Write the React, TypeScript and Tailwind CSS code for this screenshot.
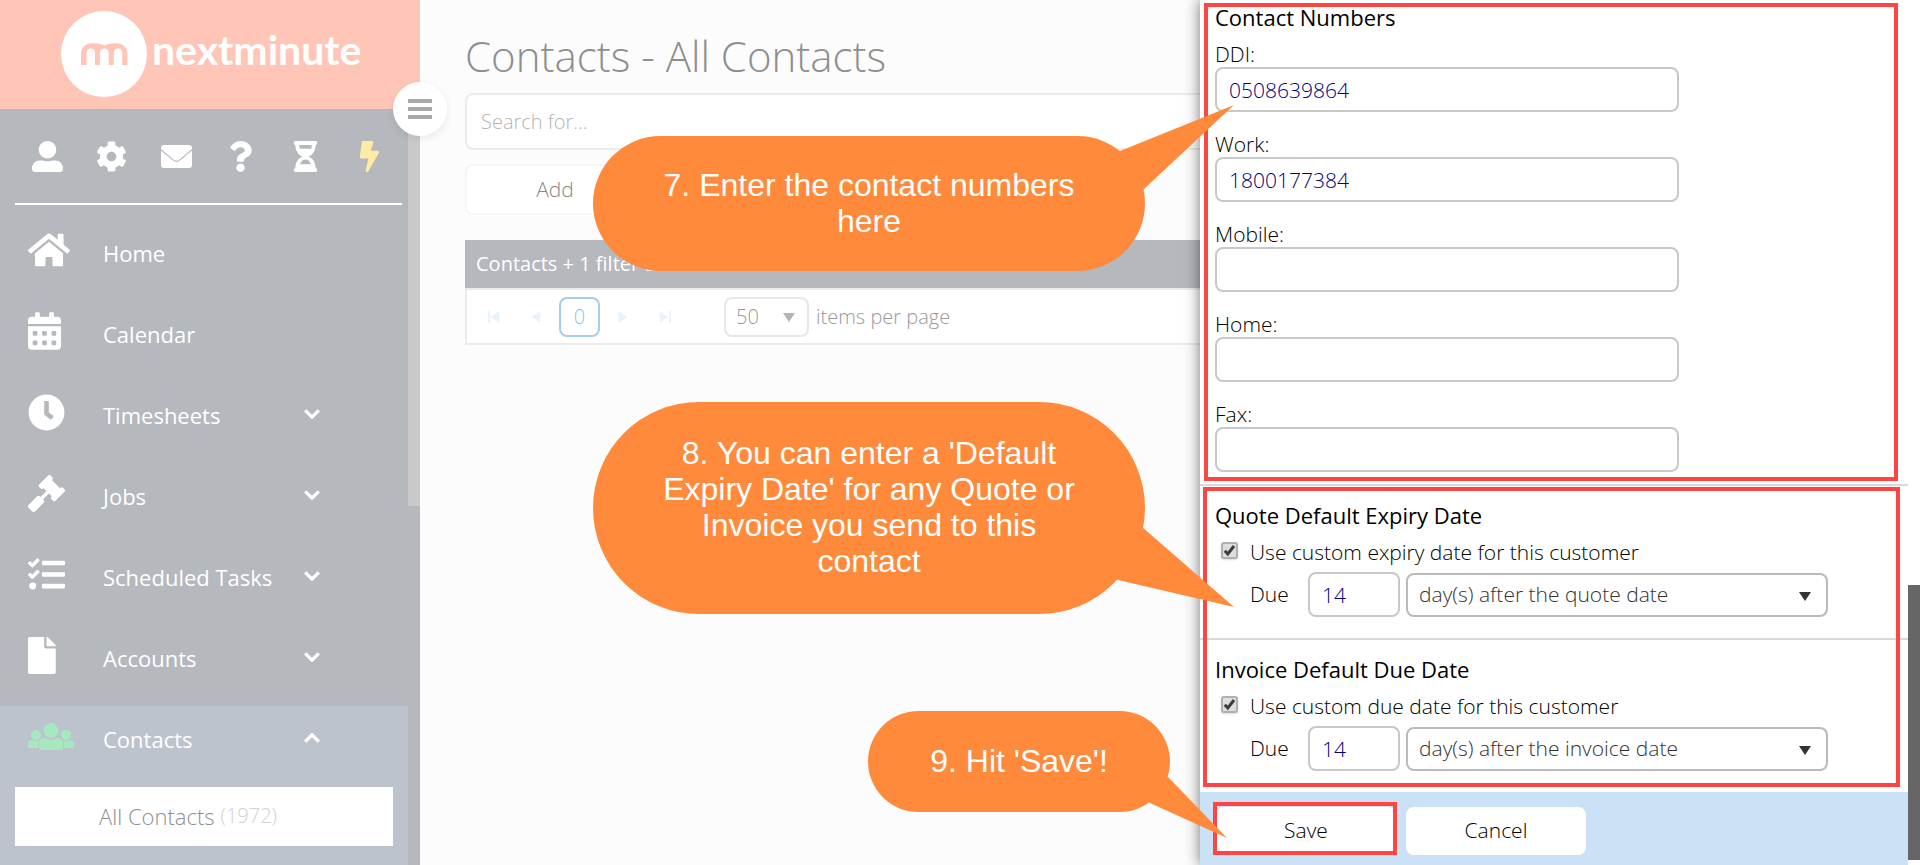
import { useState } from 'react';
import type { ReactNode } from 'react';
import type { IconType } from 'react-icons';
import {
  FaBolt,
  FaCalendarAlt,
  FaClock,
  FaCog,
  FaFile,
  FaGavel,
  FaHome,
  FaHourglassHalf,
  FaQuestion,
  FaTasks,
  FaUserAlt,
} from 'react-icons/fa';

type NavItem = {
  label: string;
  icon: IconType;
  iconClass: string;
  expandable: boolean;
};

const navItems: NavItem[] = [
  { label: 'Home', icon: FaHome, iconClass: 'w-[42px] h-[38px]', expandable: false },
  { label: 'Calendar', icon: FaCalendarAlt, iconClass: 'w-[33px] h-[38px]', expandable: false },
  { label: 'Timesheets', icon: FaClock, iconClass: 'w-[37px] h-[37px]', expandable: true },
  { label: 'Jobs', icon: FaGavel, iconClass: 'w-[37px] h-[37px]', expandable: true },
  { label: 'Scheduled Tasks', icon: FaTasks, iconClass: 'w-[37px] h-[37px]', expandable: true },
  { label: 'Accounts', icon: FaFile, iconClass: 'w-[28px] h-[37px]', expandable: true },
];

function EnvelopeIcon({ className }: { className?: string }) {
  return (
    <svg viewBox="0 0 31 31" className={className} fill="currentColor">
      <path d="M3 4H28Q31 4 31 7V8L18.500 18.500Q15.500 21 12.500 18.500L0 8V7Q0 4 3 4Z" />
      <path d="M0 9.500 12 19.600Q15.500 22.200 19 19.600L31 9.500V24Q31 27 28 27H3Q0 27 0 24Z" />
    </svg>
  );
}

function PeopleIcon({ className }: { className?: string }) {
  return (
    <svg viewBox="0 0 46 27" className={className} fill="currentColor">
      <circle cx="23" cy="7.500" r="7.500" />
      <circle cx="8" cy="12" r="5" />
      <circle cx="38" cy="12" r="5" />
      <path d="M16 15Q23 18.500 30 15Q35 15.500 35 20.500V25Q35 27 33 27H13Q11 27 11 25V20.500Q11 15.500 16 15Z" />
      <path d="M4 17Q8 18.800 11.500 17Q10 18.500 10 21V25H2Q0 25 0 23V21Q0 17.500 4 17Z" />
      <path d="M42 17Q38 18.800 34.500 17Q36 18.500 36 21V25H44Q46 25 46 23V21Q46 17.500 42 17Z" />
    </svg>
  );
}

const shortcuts = [
  { label: 'Profile', icon: FaUserAlt, className: 'text-white' },
  { label: 'Settings', icon: FaCog, className: 'text-white' },
  { label: 'Messages', icon: EnvelopeIcon, className: 'text-white' },
  { label: 'Help', icon: FaQuestion, className: 'text-white' },
  { label: 'Timer', icon: FaHourglassHalf, className: 'text-white' },
  { label: 'Quick actions', icon: FaBolt, className: 'text-[#ffeba3]' },
];

const phoneFields = [
  { id: 'ddi', label: 'DDI:', value: '0508639864' },
  { id: 'work', label: 'Work:', value: '1800177384' },
  { id: 'mobile', label: 'Mobile:', value: '' },
  { id: 'home', label: 'Home:', value: '' },
  { id: 'fax', label: 'Fax:', value: '' },
];

function Chevron({ up = false }: { up?: boolean }) {
  return (
    <svg viewBox="0 0 16 10" className="w-4 h-[10px] mt-1" fill="none" stroke="currentColor" strokeWidth="3.4">
      <path d={up ? 'M1.2 8.6 8 1.9l6.8 6.7' : 'M1.2 1.4 8 8.1l6.8-6.7'} />
    </svg>
  );
}

function Logo() {
  return (
    <a href="#home" className="flex items-center gap-[5px] h-[109px] pl-[61px] pb-px bg-[#ffc5b7] text-white">
      <svg viewBox="0 0 86 86" className="w-[86px] h-[86px] shrink-0">
        <circle cx="43" cy="43" r="43" fill="#fff" />
        <path
          d="M20 54V43C20 36.500 24.500 32.300 31 32.300C36 32.300 40 32.800 43.500 34.500C47 32.800 50.500 32.300 55.500 32.300C62 32.300 66.500 36.500 66.500 43V54H61.200V42C61.200 39 59.500 37.500 57 37.500C54.500 37.500 52.800 39 52.800 42V54H47.700V42C47.700 39 46 37.500 43.500 37.500C41 37.500 39 39 39 42V54H34V42C34 39 32.500 37.500 30 37.500C27.500 37.500 25.600 39 25.600 42V54Z"
          fill="#ffc5b7"
        />
      </svg>
      <span className="font-['Lato',sans-serif] font-bold text-[41px] leading-[50px] pb-2">nextminute</span>
    </a>
  );
}

function Sidebar() {
  return (
    <aside className="relative w-[420px] shrink-0 bg-[#b5b8bd] text-white">
      <Logo />
      <button
        aria-label="Toggle menu"
        className="absolute z-10 top-[82px] -right-[27px] w-[54px] h-[54px] rounded-full bg-white shadow-[0_3px_8px_rgba(0,0,0,0.08)] flex flex-col items-center justify-center gap-1"
      >
        <span className="w-6 h-1 bg-[#a9a9a9]" />
        <span className="w-6 h-1 bg-[#a9a9a9]" />
        <span className="w-6 h-1 bg-[#a9a9a9]" />
      </button>
      <div className="flex">
        <div className="flex-1">
          <div className="h-[96px] ml-[15px] mr-[6px] flex items-center border-b-2 border-white">
            {shortcuts.map(({ label, icon: Icon, className }) => (
              <button key={label} aria-label={label} className={`flex-1 flex justify-center ${className}`}>
                <Icon className="w-[31px] h-[31px]" />
              </button>
            ))}
          </div>
          <nav className="pt-[15px]">
            {navItems.map(({ label, icon: Icon, iconClass, expandable }) => (
              <a key={label} href="#nav" className="flex items-center h-[81px] pl-7 pb-[21px]">
                <span className="w-[75px] shrink-0">
                  <Icon className={iconClass} preserveAspectRatio="xMinYMid meet" />
                </span>
                <span className="w-[201px] pt-[5px] text-[22px] leading-7">{label}</span>
                {expandable && <Chevron />}
              </a>
            ))}
            <div className="bg-[#bcc3cc] pb-[19px]">
              <a href="#contacts" className="flex items-center h-[81px] pl-7 pb-[21px]">
                <span className="w-[75px] shrink-0">
                  <PeopleIcon className="w-[46px] h-[27px] text-[#a8e8c0]" />
                </span>
                <span className="w-[201px] pt-[5px] text-[22px] leading-7">Contacts</span>
                <Chevron up />
              </a>
              <a
                href="#all-contacts"
                className="flex items-center h-[59px] mx-[15px] pl-[84px] pb-px bg-white text-[22px] font-light text-[#8f8f8f]"
              >
                All Contacts <span className="ml-[6px] text-[20px] text-[#d0d0d0]">(1972)</span>
              </a>
            </div>
          </nav>
        </div>
        <div className="w-3">
          <div className="h-[397px] bg-[#c9c9c9]" />
        </div>
      </div>
    </aside>
  );
}

function PagerArrow({ label, flip = false, bar = false }: { label: string; flip?: boolean; bar?: boolean }) {
  return (
    <button aria-label={label} className="w-[42px] h-10 flex items-center justify-center text-[#e9f3fb]">
      <svg viewBox="0 0 12 12" className={`w-3 h-3 ${flip ? 'rotate-180' : ''}`} fill="currentColor">
        <path d={bar ? 'M0 0h2v12H0zM11.500 0v12L2.500 6z' : 'M10.500 0v12L1.500 6z'} />
      </svg>
    </button>
  );
}

function Triangle({ className }: { className: string }) {
  return (
    <svg viewBox="0 0 12 9" className={`absolute w-3 h-[9px] pointer-events-none ${className}`} fill="currentColor">
      <path d="M0 0h12L6 9z" />
    </svg>
  );
}

function ContactsList() {
  return (
    <main className="flex-1 min-w-0 pl-[45px] pt-[27px] bg-[#fcfcfc]">
      <h1 className="text-[42px] leading-[58px] font-light text-[#8f8f8f] whitespace-nowrap">Contacts - All Contacts</h1>
      <input
        aria-label="Search"
        placeholder="Search for..."
        className="block mt-2 w-full h-[57px] pl-[14px] rounded-l-lg border-2 border-r-0 border-[#ebebeb] bg-white text-[20px] font-light placeholder:text-[#b5b5b5]"
      />
      <button className="block mt-[14px] w-[180px] h-[51px] rounded-lg border-2 border-[#f6f6f6] bg-white text-[21px] font-light text-[#888]">
        Add
      </button>
      <div className="mt-[25px] h-12 pl-[11px] flex items-center bg-[#b5b8bd] text-white text-[20px]">
        Contacts + 1 filter active
      </div>
      <div className="flex items-center h-[57px] pl-[6px] border-2 border-r-0 border-[#ebebeb] bg-white">
        <PagerArrow label="First page" bar />
        <PagerArrow label="Previous page" />
        <button className="w-[41px] h-10 mx-[2px] rounded-lg border-2 border-[#a8cdeb] text-[20px] font-light text-[#8fbfe6]">0</button>
        <PagerArrow label="Next page" flip />
        <PagerArrow label="Last page" flip bar />
        <div className="relative ml-[38px]">
          <select
            id="page-size"
            className="appearance-none block w-[85px] h-10 pl-[10px] rounded-lg border-2 border-[#e8e8e8] bg-white text-[20px] font-light text-[#999]"
          >
            <option>50</option>
          </select>
          <Triangle className="right-[14px] top-4 text-[#b4b4b4]" />
        </div>
        <label htmlFor="page-size" className="ml-[7px] text-[20px] font-light text-[#999]">
          items per page
        </label>
      </div>
    </main>
  );
}

type DueDateProps = {
  id: string;
  title: string;
  checkLabel: string;
  rule: string;
};

function DueDateSection({ id, title, checkLabel, rule }: DueDateProps) {
  const [custom, setCustom] = useState(true);

  return (
    <section className="h-[154px] pl-[15px] pt-[15px] border-t-2 border-[#dadada]">
      <h2 className="text-[22px] leading-7">{title}</h2>
      <div className="flex items-start h-[38px] pt-2">
        <span className="relative ml-[6px] mt-[5px] w-[17px] h-[17px]">
          <input
            id={`${id}-custom`}
            type="checkbox"
            checked={custom}
            onChange={(e) => setCustom(e.target.checked)}
            className="appearance-none block w-[17px] h-[17px] rounded-[3px] border-2 border-[#b0b0b0] bg-[#dedede] shadow-[0_1px_2px_rgba(0,0,0,0.15)]"
          />
          {custom && (
            <svg viewBox="0 0 17 17" className="absolute inset-0 pointer-events-none" fill="none" stroke="#3c3c3c" strokeWidth="3">
              <path d="M3.800 8.800 6.800 12 13 4" />
            </svg>
          )}
        </span>
        <label htmlFor={`${id}-custom`} className="ml-3 text-[21px] leading-[30px] font-light">
          {checkLabel}
        </label>
      </div>
      <div className="flex items-center gap-[6px] mt-[5px]">
        <label htmlFor={`${id}-days`} className="ml-[35px] w-[52px] text-[21px] font-light">
          Due
        </label>
        <input
          id={`${id}-days`}
          defaultValue="14"
          className="w-[92px] h-[45px] pl-3 rounded-lg border-2 border-[#c8c8c8] text-[21px] font-light text-[#000080]"
        />
        <div className="relative">
          <select
            aria-label="Due rule"
            className="appearance-none block w-[422px] h-11 pl-[11px] rounded-lg border-2 border-[#bababa] bg-white text-[21px] font-light text-[#333]"
          >
            <option>{rule}</option>
          </select>
          <Triangle className="right-[17px] top-[19px] text-[#333]" />
        </div>
      </div>
    </section>
  );
}

function EditPanel() {
  return (
    <div className="relative z-20 flex w-[720px] shrink-0 bg-white text-black shadow-[0_0_14px_rgba(0,0,0,0.55)]">
      <form className="flex-1 min-w-0 flex flex-col" onSubmit={(e) => e.preventDefault()}>
        <section className="relative h-[484px] pl-[15px] pt-[3px]">
          <div className="absolute left-1 right-[10px] top-[3px] bottom-[3px] border-4 border-[#ff4444] pointer-events-none" />
          <h2 className="text-[22px] leading-7">Contact Numbers</h2>
          <div className="flex flex-col gap-[17px] pt-2">
            {phoneFields.map((field) => (
              <div key={field.id}>
                <label htmlFor={field.id} className="block h-7 text-[21px] leading-[30px] font-light">
                  {field.label}
                </label>
                <input
                  id={field.id}
                  defaultValue={field.value}
                  className="block w-[464px] h-[45px] pl-3 rounded-lg border-2 border-[#c8c8c8] text-[21px] font-light text-[#000080]"
                />
              </div>
            ))}
          </div>
        </section>

        <div className="relative">
          <DueDateSection
            id="quote"
            title="Quote Default Expiry Date"
            checkLabel="Use custom expiry date for this customer"
            rule="day(s) after the quote date"
          />
          <DueDateSection
            id="invoice"
            title="Invoice Default Due Date"
            checkLabel="Use custom due date for this customer"
            rule="day(s) after the invoice date"
          />
          <div className="absolute left-[3px] right-2 top-[3px] bottom-[5px] border-4 border-[#ff4444] pointer-events-none" />
        </div>

        <footer className="flex-1 flex items-start gap-[10px] pl-4 pt-[15px] bg-[#cbe2f6] text-[21px] font-light">
          <div className="relative">
            <button type="submit" className="block w-[180px] h-12 rounded-lg bg-white">Save</button>
            <div className="absolute -left-[3px] -right-px -top-[5px] bottom-0 border-4 border-[#ff4444] pointer-events-none" />
          </div>
          <button type="button" className="w-[180px] h-12 rounded-lg bg-white">Cancel</button>
        </footer>
      </form>
      <div className="w-3 bg-white pt-[585px] pb-[5px]">
        <div className="h-full bg-[#666]" />
      </div>
    </div>
  );
}

type CalloutProps = {
  className: string;
  tailClass: string;
  viewBox: string;
  points: string;
  children: ReactNode;
};

// Speech bubble with a tail that points at the control it describes
function Callout({ className, tailClass, viewBox, points, children }: CalloutProps) {
  return (
    <div
      className={`absolute z-30 flex items-center justify-center rounded-full pb-[2px] bg-[#ff8a3c] text-white text-center text-[32px] leading-9 font-['Liberation_Sans',Arial,sans-serif] ${className}`}
    >
      <svg viewBox={viewBox} className={`absolute pointer-events-none ${tailClass}`} fill="#ff8a3c">
        <polygon points={points} />
      </svg>
      <p className="relative">{children}</p>
    </div>
  );
}

export default function App() {
  return (
    <div className="relative flex h-screen overflow-hidden font-['Open_Sans','Noto_Sans',sans-serif]">
      <Sidebar />
      <ContactsList />
      <EditPanel />

      <Callout
        className="right-[775px] top-[136px] w-[552px] h-[135px] px-16"
        tailClass="-right-[89px] -top-[31px] w-[140px] h-[100px]"
        viewBox="0 0 140 100"
        points="0,70 26,46 140,0 50,84 30,100"
      >
        7. Enter the contact numbers here
      </Callout>
      <Callout
        className="right-[775px] top-[402px] w-[552px] h-[212px] px-[70px]"
        tailClass="-right-[89px] top-[110px] w-[140px] h-[96px]"
        viewBox="0 0 140 96"
        points="0,50 48,15 140,95 24,68"
      >
        8. You can enter a 'Default Expiry Date' for any Quote or Invoice you send to this contact
      </Callout>
      <Callout
        className="right-[750px] top-[711px] w-[302px] h-[101px]"
        tailClass="-right-[57px] top-[50px] w-[100px] h-[78px]"
        viewBox="0 0 100 78"
        points="0,20 41,16 100,77 23,42"
      >
        9. Hit 'Save'!
      </Callout>
    </div>
  );
}
